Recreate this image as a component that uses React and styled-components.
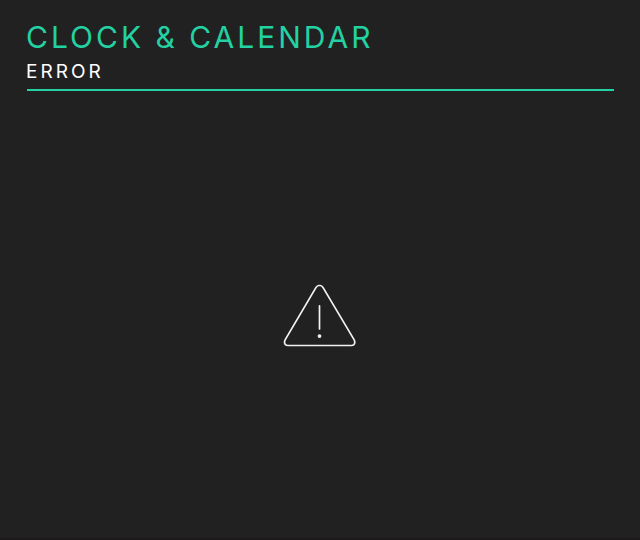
import React from "react";
import styled, { createGlobalStyle } from "styled-components";

const GlobalStyle = createGlobalStyle`
  * { box-sizing: border-box; }
  body { margin: 0; background: #212121; font-family: Inter, "Liberation Sans", sans-serif; }
`;

const Page = styled.div`
  min-height: 100vh;
  display: flex;
  flex-direction: column;
  padding: 19px 26px 0;
  background: #212121;
  border-bottom: 2px solid #1c1a1b;
`;

const Header = styled.header`
  display: flex;
  flex-direction: column;
`;

const Title = styled.h1`
  margin: 0;
  font-size: 30px;
  line-height: 36px;
  font-weight: 400;
  letter-spacing: 3px;
  color: #23d1a2;
`;

const Subtitle = styled.h2`
  margin: 0;
  padding-top: 5px;
  font-size: 19px;
  line-height: 24px;
  font-weight: 400;
  letter-spacing: 3px;
  color: #ffffff;
`;

const Rule = styled.hr`
  width: auto;
  height: 2px;
  margin: 5px 0 0 1px;
  border: 0;
  background: #23d1a2;
`;

const Content = styled.main`
  flex: 1;
  display: flex;
  align-items: center;
  justify-content: center;
`;

const WarningIcon = styled.svg`
  display: block;
  width: 74px;
  height: 64px;
  fill: none;
  stroke: #f2f2f2;
  stroke-width: 1.7;
  stroke-linecap: round;
  stroke-linejoin: round;
`;

export default function App() {
  return (
    <>
      <GlobalStyle />
      <Page>
        <Header>
          <Title>CLOCK &amp; CALENDAR</Title>
          <Subtitle>ERROR</Subtitle>
          <Rule />
        </Header>
        <Content>
          <WarningIcon viewBox="0 0 74 64" role="img" aria-label="Error">
            <path d="M32.9 4.6 Q34.2 2.5 35.7 2.5 H37.3 Q38.9 2.5 40.1 4.6 L70.9 56.4 Q72.7 59.6 70.9 61.6 Q69.9 62.5 68.5 62.5 H5 Q3.4 62.5 2.4 61.6 Q0.6 59.6 2.4 56.4 Z" />
            <path d="M36.5 22.8 V46" />
            <circle cx="36.5" cy="53.1" r="1.9" fill="#f2f2f2" stroke="none" />
          </WarningIcon>
        </Content>
      </Page>
    </>
  );
}
